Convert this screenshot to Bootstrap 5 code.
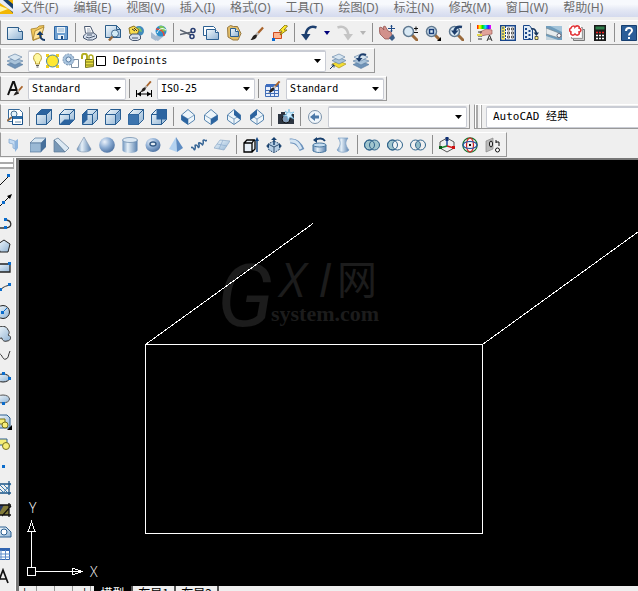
<!DOCTYPE html>
<html lang="zh-CN">
<head>
<meta charset="utf-8">
<meta name="viewport" content="width=device-width, initial-scale=1">
<title>AutoCAD</title>
<link href="https://cdn.jsdelivr.net/npm/bootstrap@5.3.0/dist/css/bootstrap.min.css" rel="stylesheet">
<style>
body { background: #efefef; font-family: "Liberation Sans", "Noto Sans CJK SC", sans-serif; }
.menubar { height: 17px; gap: 15px; background: linear-gradient(#f7f9fd 0 25%, #e3e7f4 60%, #d4daee); }
.menubar a { font: 12px/16px "Noto Sans", "Noto Sans CJK SC", sans-serif; color: #6c6c6c; white-space: nowrap; }
.app-logo { width: 18px; height: 17px; margin-right: -12px; }
.band { height: 28px; padding-top: 3px; }
.toolbar { height: 25px; padding: 0 2px; border: 1px solid #999; border-top-color: #fff; background: #f0f0f0; }
.toolbar.open-end { border-right: 0; flex: 1 0 auto; }
.tool { width: 23px; height: 23px; padding: 0; border: 0; background: none; display: flex; align-items: center; justify-content: center; flex: none; }
.tool svg { width: 16px; height: 16px; }
.tool.more { width: 13px; }
.tool.more svg { width: 6px; height: 4px; }
.divider { width: 6px; height: 19px; flex: none; background: linear-gradient(#8e8e8e, #8e8e8e) center / 1px 100% no-repeat; }
.combo {
  appearance: none; height: 22px; margin-left: 2px; border: 1px solid #c9ccd4; border-width: 2px 1px 1px; border-radius: 2px; padding: 0 3px; color: #000;
  font: 10px/18px "DejaVu Sans Mono", "Noto Sans CJK SC", monospace;
  background: #fff url("data:image/svg+xml,%3Csvg xmlns='http://www.w3.org/2000/svg' viewBox='0 0 7 4'%3E%3Cpath d='M0 0h7L3.5 4z'/%3E%3C/svg%3E") right 4px center / 7px 4px no-repeat;
}
.layer-combo { width: 298px; padding-left: 84px; }
.layer-state { position: absolute; left: 7px; top: 3px; width: 76px; height: 16px; pointer-events: none; }
.style-combo { width: 98px; }
.view-combo { width: 139px; }
.space-combo { width: 168px; padding-left: 6px; font-size: 11px; background-image: none; }
.grip { width: 9px; background: linear-gradient(90deg, #fff 0 1px, #aaa 1px 3px, transparent 3px 5px, #fff 5px 6px, #aaa 6px 7px, transparent 7px); }
.work { margin-top: 1px; min-height: 0; }
.draw-bar { width: 16px; overflow: hidden; border-right: 1px solid #fff; }
.draw-grip { height: 11px; width: 14px; border: 2px solid #aaa; border-width: 0 1px 2px 0; background: linear-gradient(#fff 0 4px, #aaa 4px 6px, #fff 6px 9px); }
.draw-bar .tool { width: 24px; height: 22px; margin-left: -8px; }
.stage { border: solid #777; border-width: 2px 0 0 3px; min-width: 0; }
.paper { background: #000; overflow: hidden; }
.paper > svg { display: block; }
.ucs { position: absolute; left: 0; bottom: 0; width: 90px; height: 90px; }
.tabs { height: 5px; overflow: hidden; background: #efefef; }
.tabs button { border: 0; padding: 0; height: 14px; font: 12px/12px "Noto Sans CJK SC", sans-serif; background: #efefef; color: #000; flex: none; }
.tabs .step { width: 18px; border-right: 1px solid #999; }
.tabs .sheet { width: 43px; border-right: 2px solid #555; }
.tabs .sheet.current { background: #000; color: #fff; margin-left: 3px; width: 39px; }
</style>
<script src="https://cdn.jsdelivr.net/npm/bootstrap@5.3.0/dist/js/bootstrap.bundle.min.js"></script>
</head>
<body class="vh-100 d-flex flex-column overflow-hidden">

<svg width="0" height="0" class="position-absolute" aria-hidden="true">
  <defs>
    <linearGradient id="gl" x1="0" y1="0" x2="1" y2="1"><stop offset="0" stop-color="#f4fafd"/><stop offset="1" stop-color="#8fb2d3"/></linearGradient>
    <linearGradient id="gm" x1="0" x2="1"><stop offset="0" stop-color="#6d93bd"/><stop offset=".35" stop-color="#e6f0f8"/><stop offset="1" stop-color="#5880ae"/></linearGradient>
    <radialGradient id="gs" cx=".35" cy=".3" r=".75"><stop offset="0" stop-color="#edf3fb"/><stop offset=".5" stop-color="#8eaed4"/><stop offset="1" stop-color="#4b70a0"/></radialGradient>
    <linearGradient id="rain"><stop offset="0" stop-color="#f00"/><stop offset=".2" stop-color="#ff0"/><stop offset=".4" stop-color="#0d0"/><stop offset=".6" stop-color="#0df"/><stop offset=".8" stop-color="#22f"/><stop offset="1" stop-color="#f0f"/></linearGradient>
    <g id="cube" stroke="#285d91" stroke-linejoin="round"><path fill="url(#gl)" d="M.5 5.500h10v10h-10zM.5 5.500l5-5h10l-5 5zM10.500 5.500l5-5v10l-5 5z"/></g>
    <g id="iso" stroke="#5583ae" stroke-linejoin="round"><path fill="#edf5fa" d="M8 .5L14.500 6v5L8 15.500 1.500 11V6z"/><path fill="none" d="M1.500 6L8 10l6.500-4M8 10v5" stroke-width=".7"/></g>
    <g id="lens"><path d="M10 10l5 5" stroke="#9a6a3c" stroke-width="3" stroke-linecap="round"/><circle cx="6.500" cy="6.500" r="5" fill="#d9e9f4" stroke="#5f7890" stroke-width="1.500"/></g>
    <g id="brush"><path d="M14.500 .5L7 9" stroke="#a9642c" stroke-width="2.500"/><path d="M9 6.500L6 10" stroke="#bbb" stroke-width="2.500"/><path d="M7.500 8.500c1 4-3.500 6-7 6 2-1.500 2-5 5-6z" fill="#25211f"/></g>
    <g id="printer"><path fill="#fff" stroke="#47566e" d="M3.500 8l-1-6.500h6l3 6.500"/><path d="M5 4h3M5 6h4" stroke="#9aa6b8"/><path fill="#d6dfec" stroke="#47566e" d="M1.500 11l3-3h7l3 2v3l-4 2h-5l-4-2z"/><path d="M4 12l3 1 6-2M5 10h5" stroke="#47566e" fill="none"/></g>
    <g id="stack" stroke="#587ba0" stroke-width=".6"><path fill="#6f93b8" d="M0 11.500l8-3 8 3-8 4z"/><path fill="#a9c3da" d="M0 8l8-3 8 3-8 4z"/><path fill="#d7e5f0" d="M1 4l7-3 7 3-7 4z"/></g>
  </defs>
</svg>

<nav class="menubar d-flex flex-shrink-0 overflow-hidden" aria-label="主菜单">
  <svg class="app-logo flex-shrink-0" viewBox="0 0 18 17"><path fill="#f2b705" d="M0 0h13v14H0z"/><path fill="#173f6b" d="M0 0h8l5 4v9z"/><path fill="#e9edf5" d="M0 0h3l10 9v3L0 3z"/><path fill="#fff6a8" d="M0 6l8 3-8 3z"/></svg>
  <a href="#" class="text-decoration-none">文件(F)</a>
  <a href="#" class="text-decoration-none">编辑(E)</a>
  <a href="#" class="text-decoration-none">视图(V)</a>
  <a href="#" class="text-decoration-none">插入(I)</a>
  <a href="#" class="text-decoration-none">格式(O)</a>
  <a href="#" class="text-decoration-none">工具(T)</a>
  <a href="#" class="text-decoration-none">绘图(D)</a>
  <a href="#" class="text-decoration-none">标注(N)</a>
  <a href="#" class="text-decoration-none">修改(M)</a>
  <a href="#" class="text-decoration-none">窗口(W)</a>
  <a href="#" class="text-decoration-none">帮助(H)</a>
</nav>

<div class="band d-flex flex-shrink-0 overflow-hidden">
  <div class="toolbar open-end d-flex align-items-center" role="toolbar" aria-label="标准">
    <button class="tool" aria-label="新建"><svg viewBox="0 0 16 16"><path fill="url(#gl)" stroke="#2c5d8a" d="M.5 2.500h11l4 4v8H.5z"/><path fill="#fff" stroke="#2c5d8a" d="M11.500 2.500v4h4"/></svg></button>
    <button class="tool" aria-label="打开"><svg viewBox="0 0 16 16"><path fill="#f0c75a" stroke="#a5802f" stroke-width=".8" d="M1 4l6-1 2-2 5-.5-3 12-8 3z"/><path fill="#ffe49a" stroke="#a5802f" stroke-width=".8" d="M3 15L5 6l9-4-3 10z"/><path fill="none" stroke="#163a66" stroke-width="1.800" d="M15 15c-4 0-5-2-5-6"/><path fill="#163a66" d="M6.500 10L10 6l3.500 4z"/></svg></button>
    <button class="tool" aria-label="保存"><svg viewBox="0 0 16 16"><path fill="#6fa0d0" stroke="#2a62a0" d="M1.500 1.500h13v13h-13z"/><path fill="#e8f1f8" d="M4 2h8v6H4zM5 10h6v4H5z"/><path d="M5 4h6M5 6h6" stroke="#92b2cf"/><path fill="#1d4c83" d="M8 11h2v3H8z"/></svg></button>
    <span class="divider"></span>
    <button class="tool" aria-label="打印"><svg viewBox="0 0 16 16"><use href="#printer"/></svg></button>
    <button class="tool" aria-label="打印预览"><svg viewBox="0 0 16 16"><path fill="url(#gl)" stroke="#2c5d8a" d="M.5 12.500v-12h11l4 4v8z"/><path fill="none" stroke="#2c5d8a" d="M11.500 .5v4h4"/><path stroke="#9a6a3c" stroke-width="2.500" d="M8 11l-4 4.500"/><circle cx="10" cy="8.500" r="3.500" fill="#d3eaf4" stroke="#456c91"/></svg></button>
    <button class="tool" aria-label="发布"><svg viewBox="0 0 16 16"><circle cx="11" cy="6" r="5" fill="#408bbd"/><path d="M8 4c3-3 5-1 6 3l-3-1z" fill="#7ec66e"/><path fill="#f9dc4c" stroke="#8b7322" d="M1 3l5-2 5 4-2 5-7-1z"/><path d="M4 4l3 2M6 3l3 3" stroke="#333"/><path fill="#d6dfec" stroke="#47566e" d="M1.500 11l3-2h6l2 2v3l-3 1.500h-5l-3-2z"/><path d="M4 13h6" stroke="#47566e"/></svg></button>
    <button class="tool" aria-label="三维 DWF"><svg viewBox="0 0 16 16"><path fill="#a6bad0" d="M0 7l5 1v8l-5-3zM5 9l8 2-6 5-5-2z"/><path fill="#e7eff7" d="M0 7l4-3 4 3-3 4z"/><circle cx="10" cy="6" r="5.500" fill="#2d8fcb"/><path fill="#7cc758" d="M8 1c4-1 6 1 7 5l-5 1z"/><path fill="none" stroke="#e0483a" stroke-width="1.500" d="M5 4c4 0 8 2 8 7"/><path fill="none" stroke="#fff" d="M6 8c2-4 5-6 9-3"/></svg></button>
    <span class="divider"></span>
    <button class="tool" aria-label="剪切"><svg viewBox="0 0 16 16"><path d="M0 5l11 5M0 9.500L12 7" stroke="#5c6572" stroke-width="1.500"/><circle cx="13" cy="5.500" r="2" fill="none" stroke="#273c70" stroke-width="1.500"/><circle cx="12" cy="11.500" r="2" fill="none" stroke="#273c70" stroke-width="1.500"/></svg></button>
    <button class="tool" aria-label="复制"><svg viewBox="0 0 16 16"><path fill="#fff" stroke="#2c6092" d="M.5 1.500h10l2 2v7H.5z"/><path fill="url(#gl)" stroke="#2c6092" d="M3.500 4.500h9l3 3v7h-12z"/><path fill="#fff" stroke="#2c6092" d="M12.500 4.500v3h3"/></svg></button>
    <button class="tool" aria-label="粘贴"><svg viewBox="0 0 16 16"><path fill="#e4bf69" stroke="#97783f" d="M1.500 2.500l3-2 3 1h4l3.500 7-3 6.500h-5l-5-3z"/><path fill="url(#gl)" stroke="#2c6092" d="M4.500 3.500h5l3 3v5h-8z"/><path fill="#fff" stroke="#2c6092" d="M9.500 3.500v3h3"/></svg></button>
    <button class="tool" aria-label="特性匹配"><svg viewBox="0 0 16 16"><use href="#brush" transform="translate(1 2) scale(.9)"/></svg></button>
    <button class="tool" aria-label="块编辑器"><svg viewBox="0 0 16 16"><path fill="#ffb58f" stroke="#d04a1c" d="M1.500 7.500h8v6h-8z"/><path fill="#ffe92e" stroke="#7d6a00" stroke-width=".8" d="M13 0L7 6h3L8 10l7-5h-3l3.500-4z"/><path fill="#0a6ad0" d="M0 13h3v3H0z"/></svg></button>
    <span class="divider"></span>
    <button class="tool" aria-label="放弃"><svg viewBox="0 0 16 16"><path fill="none" stroke="#1d3f6f" stroke-width="2.500" d="M15.500 2.500C9 0 5 4 4.500 11"/><path fill="#1d3f6f" d="M0 9h9.500L5 15.500z"/></svg></button>
    <button class="tool more" aria-label="放弃列表"><svg viewBox="0 0 6 4"><path fill="#00007a" d="M0 0h6L3 4z"/></svg></button>
    <button class="tool" aria-label="重做"><svg viewBox="0 0 16 16"><path fill="none" stroke="#c4c4c4" stroke-width="2.500" d="M.5 2.500C7 0 11 4 11.500 11"/><path fill="#c4c4c4" d="M16 9H6.500L11 15.500z"/></svg></button>
    <button class="tool more" aria-label="重做列表"><svg viewBox="0 0 6 4"><path fill="#b5b5b5" d="M0 0h6L3 4z"/></svg></button>
    <span class="divider"></span>
    <button class="tool" aria-label="实时平移"><svg viewBox="0 0 16 16"><path fill="#d2918b" stroke="#8a4844" stroke-width=".7" d="M0 3l2-1 3 3-1-3 2-1 3 5 3 1 1 4-3 3-4 0-5-5z"/><path fill="#3c5d86" d="M10 13l4-4 2 4-3 3z"/><path stroke="#1f4a84" d="M12.500 0v7M9 3.500h7"/><path fill="#1f4a84" d="M11 1.500L12.500 0 14 1.500zM11 5.500l1.500 1.500L14 5.500z"/></svg></button>
    <button class="tool" aria-label="实时缩放"><svg viewBox="0 0 16 16"><use href="#lens"/><path d="M12 3.500h4M14 1.500v4M12 7.500h4" stroke="#111"/></svg></button>
    <button class="tool" aria-label="窗口缩放"><svg viewBox="0 0 16 16"><use href="#lens"/><path fill="none" stroke="#173c78" stroke-width="1.500" d="M4.500 4.500h4v4h-4z"/><path d="M16 12v4h-4z"/></svg></button>
    <button class="tool" aria-label="缩放上一个"><svg viewBox="0 0 16 16"><use href="#lens"/><path fill="none" stroke="#1c3d6b" stroke-width="2.500" d="M14 2C9 1 7 3 6.500 7"/><path fill="#1c3d6b" d="M3 5.500h7.500L6.500 10z"/></svg></button>
    <span class="divider"></span>
    <button class="tool" aria-label="特性"><svg viewBox="0 0 16 16"><path fill="url(#rain)" d="M0 0h14v4H0z"/><path fill="#e2a39a" stroke="#8e4a45" stroke-width=".6" d="M3 7l6-3 6 1v4l-6 1-5 1z"/><path fill="none" stroke="#333" d="M1 7h4M1 11h4M1 14h4M10 16l2.500-6L15 16M11 14h3"/><path fill="#e6d94b" d="M0 9h5v2H0z"/></svg></button>
    <button class="tool" aria-label="设计中心"><svg viewBox="0 0 16 16"><path fill="#fff" stroke="#17458a" stroke-width="1.500" d="M.75 .75h14.500v14.500H.75z"/><path fill="#f5e25c" d="M1.500 1.500H5v13H1.500z"/><path stroke="#17458a" d="M5.500 1v14M3 2v12" stroke-dasharray="2 1"/><path fill="#fff" stroke="#333" stroke-width=".8" d="M7.500 3h2v2h-2zM11.500 3h2v2h-2zM7.500 7h2v2h-2zM11.500 7h2v2h-2zM7.500 11h2v2h-2zM11.500 11h2v2h-2z"/></svg></button>
    <button class="tool" aria-label="工具选项板"><svg viewBox="0 0 16 16"><path fill="#dfeaf5" stroke="#17458a" d="M.5 .5h6l3 4v10h-9z"/><path stroke="#17458a" stroke-width="2" stroke-dasharray="2 2" d="M3 3v11M6.500 5v9"/><path fill="none" stroke="#17365e" stroke-width="1.600" d="M8 4c4-1 5 2 5.500 5"/><path fill="#17365e" d="M10.500 7.500h5.500L13.500 11z"/><path fill="#fff27c" stroke="#333" stroke-width=".8" d="M12 11.500h3v3h-3z"/></svg></button>
    <button class="tool" aria-label="图纸集"><svg viewBox="0 0 16 16"><path fill="#6f9cbc" d="M0 1h16v14H0z"/><path fill="#a4c4da" d="M4 1h12v6z"/><path fill="#e7ecee" stroke="#73858f" stroke-width=".7" d="M0 3l13 5c3 1 3 4 0 5L0 9z"/><path fill="#c4d3dc" d="M0 11l12 4H0z"/><circle cx="13" cy="10.500" r="2" fill="#fff" stroke="#667"/></svg></button>
    <button class="tool" aria-label="标记集"><svg viewBox="0 0 16 16"><path fill="#ccc" stroke="#777" d="M4.500 4.500h11v11h-11z"/><path fill="#eee" stroke="#999" d="M2.500 2.500h11v11h-11z"/><path fill="#fff" d="M0 0h12v12H0z"/><path fill="none" stroke="#e23437" stroke-width="1.600" d="M2 3c1-3 4-2 4-1 2-2 5-1 4 1 3 1 2 4 0 4 1 3-2 4-4 2-2 2-5 1-4-2-2-1-2-3 0-4z"/></svg></button>
    <button class="tool" aria-label="快速计算器"><svg viewBox="0 0 16 16"><path fill="#1a1a1a" d="M2 0h12v16H2z"/><path fill="#2e7d4a" d="M3.500 1.500h9v3h-9z"/><path stroke="#e22" stroke-width="1.500" stroke-dasharray="2 1" d="M4 7.500h9"/><path stroke="#fff" stroke-width="1.500" stroke-dasharray="2 1" d="M4 10.500h9M4 13.500h9"/></svg></button>
    <span class="divider"></span>
    <button class="tool" aria-label="帮助"><svg viewBox="0 0 16 16"><path fill="#2a5d98" stroke="#173f70" d="M.5 .5h15v15H.5z"/><path fill="none" stroke="#fff" stroke-width="2" d="M5 6c0-4 6-4 6-.5C11 8 8 7.500 8 10.500M8 12v2"/></svg></button>
  </div>
</div>

<div class="band d-flex flex-shrink-0">
  <div class="toolbar d-flex align-items-center" role="toolbar" aria-label="图层">
    <button class="tool" aria-label="图层特性管理器"><svg viewBox="0 0 16 16"><use href="#stack"/></svg></button>
    <div class="position-relative d-flex">
      <select class="combo layer-combo" aria-label="图层"><option>Defpoints</option></select>
      <svg class="layer-state" viewBox="0 0 76 16" aria-hidden="true">
        <path fill="#fff8a0" stroke="#b89c33" d="M2.500 9c-4-4-1-8.500 2-8.500s6 4.500 2 8.500v2h-4z"/><path stroke="#555" d="M3 12.500h3M3.500 14h2"/>
        <path fill="#f1cf1b" d="M13 1h3v3h-3zM23 1h3v3h-3zM13 12h3v3h-3zM23 12h3v3h-3z"/><circle cx="19.500" cy="8" r="6" fill="#ffe832" stroke="#49829b"/>
        <path fill="#fff" stroke="#7d8ea0" d="M38.500 6.500h7v8h-7z"/><circle cx="35.500" cy="6.500" r="5.500" fill="#a9c4de" stroke="#7591b0" stroke-dasharray="2 1"/><circle cx="35.500" cy="6.500" r="2.500" fill="#e4eff9" stroke="#5b7da3"/>
        <path fill="none" stroke="#b3ad20" stroke-width="2" d="M49 6V3c0-3 5-3 5 0v3"/><path fill="#e8df3f" stroke="#79761d" d="M52.500 6.500h8v7l-8 1z"/><path stroke="#79761d" d="M53 9h7M53 12h7"/><path fill="none" stroke="#b3ad20" stroke-width="1.500" d="M56 6V3c1-2 4-1 4 1v3"/>
        <path fill="#fff" stroke="#000" d="M63.500 3.500h9v9h-9z"/>
      </svg>
    </div>
    <button class="tool" aria-label="置为当前图层"><svg viewBox="0 0 16 16"><path fill="#f3dd33" stroke="#a18b12" stroke-width=".6" d="M2 11l7-3 7 3-7 4z"/><path fill="#a9c3da" stroke="#587ba0" stroke-width=".6" d="M2 7.500l7-3 7 3-7 3.500z"/><path fill="#d7e5f0" stroke="#587ba0" stroke-width=".6" d="M2 4l7-3 6 3-6 3z"/><path d="M0 16l4-4M1.500 12H4v2.500" stroke="#17365e" fill="none"/></svg></button>
    <button class="tool" aria-label="上一个图层"><svg viewBox="0 0 16 16"><use href="#stack"/><path fill="none" stroke="#1c3d6b" stroke-width="2" d="M13 2C9 0 6 2 6 6"/><path fill="#1c3d6b" d="M3 5h6.500L6 9z"/></svg></button>
  </div>
</div>

<div class="band d-flex flex-shrink-0">
  <div class="toolbar d-flex align-items-center" role="toolbar" aria-label="样式">
    <button class="tool" aria-label="文字样式"><svg viewBox="0 0 16 16"><path fill="none" stroke="#111" stroke-width="2" d="M1 14L6 1h1l4 12M3 9h6"/><use href="#brush" transform="translate(6 5) scale(.65)"/></svg></button>
    <select class="combo style-combo" aria-label="文字样式"><option>Standard</option></select>
    <span class="divider"></span>
    <button class="tool" aria-label="标注样式"><svg viewBox="0 0 16 16"><use href="#brush" transform="translate(4 0) scale(.75)"/><path stroke="#000" d="M.5 9v7M15.500 9v7M1 13h14"/><path d="M1 13l4-2.500v5zM15 13l-4-2.500v5z"/></svg></button>
    <select class="combo style-combo" aria-label="标注样式"><option>ISO-25</option></select>
    <span class="divider"></span>
    <button class="tool" aria-label="表格样式"><svg viewBox="0 0 16 16"><path fill="#e6eefb" stroke="#426eb6" d="M.5 4.500h13v11H.5z"/><path fill="#3d6dc0" d="M1 3h13v3H1z"/><path stroke="#426eb6" d="M1 9.500h13M1 12.500h13M5.500 5v10M9.500 5v10"/><use href="#brush" transform="translate(3 0) scale(.8)"/></svg></button>
    <select class="combo style-combo" aria-label="表格样式"><option>Standard</option></select>
  </div>
</div>

<div class="band d-flex flex-shrink-0 overflow-hidden">
  <div class="toolbar d-flex align-items-center flex-shrink-0" role="toolbar" aria-label="视图">
    <button class="tool" aria-label="命名视图"><svg viewBox="0 0 16 16"><path fill="#fff" stroke="#356a9b" d="M1.500 .5h11l3 3v9h-14z"/><path stroke="#956c47" stroke-width="2" d="M0 12l5-4"/><circle cx="7" cy="5" r="3" fill="#e3f2fa" stroke="#466f91"/><path fill="#fff" stroke="#174f87" d="M5.500 7.500h10v8h-10z"/><path fill="#2d6da8" d="M6 7h9v3H6z"/><path stroke="#7594ae" d="M8 13h6"/></svg></button>
    <span class="divider"></span>
    <button class="tool" aria-label="俯视"><svg viewBox="0 0 16 16"><use href="#cube"/><path fill="#2c64a0" d="M1 5.500l4.500-5h10l-5 5z"/></svg></button>
    <button class="tool" aria-label="仰视"><svg viewBox="0 0 16 16"><use href="#cube"/><path fill="#2c64a0" d="M.5 15.500l5-5h10l-5 5z"/></svg></button>
    <button class="tool" aria-label="左视"><svg viewBox="0 0 16 16"><use href="#cube"/><path fill="#2c64a0" d="M.5 5.500l5-5v10l-5 5z"/></svg></button>
    <button class="tool" aria-label="右视"><svg viewBox="0 0 16 16"><use href="#cube"/><path fill="#7ba6d0" d="M11 6l4-4v8l-4 4z"/></svg></button>
    <button class="tool" aria-label="前视"><svg viewBox="0 0 16 16"><use href="#cube"/><path fill="#3c74ae" d="M.5 5.500h10v10H.5z"/></svg></button>
    <button class="tool" aria-label="后视"><svg viewBox="0 0 16 16"><use href="#cube"/><path fill="#2c64a0" d="M5.500 .5h10v10h-10z"/></svg></button>
    <span class="divider"></span>
    <button class="tool" aria-label="西南等轴测"><svg viewBox="0 0 16 16"><use href="#iso"/><path fill="#2c64a0" d="M1.500 6L8 10v5.500L1.500 11z"/></svg></button>
    <button class="tool" aria-label="东南等轴测"><svg viewBox="0 0 16 16"><use href="#iso"/><path fill="#2c64a0" d="M14.500 6L8 10v5.500l6.500-4.500z"/></svg></button>
    <button class="tool" aria-label="东北等轴测"><svg viewBox="0 0 16 16"><use href="#iso"/><path fill="#2c64a0" d="M8 .5L14.500 6v5L8 6z"/></svg></button>
    <button class="tool" aria-label="西北等轴测"><svg viewBox="0 0 16 16"><use href="#iso"/><path fill="#2c64a0" d="M8 .5L1.500 6v5L8 6z"/></svg></button>
    <span class="divider"></span>
    <button class="tool" aria-label="创建相机"><svg viewBox="0 0 16 16"><path fill="#2c3440" d="M0 5h3V3h4v2h9v10H0z"/><circle cx="8" cy="10" r="4" fill="#829cb8" stroke="#111"/><path fill="#d9f1ff" stroke="#5fb2dd" stroke-width=".6" d="M11 0l1 4 4-1-3 3 3 4-4-2-2 3-1-4-4 0 4-2-2-3 3 2z"/></svg></button>
    <span class="divider"></span>
    <button class="tool" aria-label="上一视图"><svg viewBox="0 0 16 16"><circle cx="8" cy="8" r="6.500" fill="#f0f6fb" stroke="#7d93aa"/><path fill="#4c79a8" d="M3 8l5-4v2.500h4v3H8V12z"/></svg></button>
    <select class="combo view-combo" aria-label="视图"><option></option></select>
  </div>
  <div class="toolbar open-end d-flex align-items-center ms-1 ps-0" role="toolbar" aria-label="工作空间">
    <span class="grip align-self-stretch"></span>
    <select class="combo space-combo flex-grow-1" aria-label="工作空间"><option>AutoCAD 经典</option></select>
  </div>
</div>

<div class="band d-flex flex-shrink-0">
  <div class="toolbar d-flex align-items-center" role="toolbar" aria-label="建模">
    <button class="tool" aria-label="多段体"><svg viewBox="0 0 16 16"><path fill="#c4dbf3" stroke="#7ca3cf" stroke-width=".7" d="M2 2l6 2v8l-2-1V7L2 6z"/><path fill="#8db4de" d="M8 4l3-2v9l-3 4z"/></svg></button>
    <button class="tool" aria-label="长方体"><svg viewBox="0 0 16 16"><path fill="#d9e8f3" stroke="#54779b" stroke-width=".7" d="M0 6l5-5h11l-5 5z"/><path fill="#9ab9d5" stroke="#54779b" stroke-width=".7" d="M0 6h11v9H0z"/><path fill="#456f9b" d="M11 6l5-5v9l-5 5z"/></svg></button>
    <button class="tool" aria-label="楔体"><svg viewBox="0 0 16 16"><path fill="#dce9f3" stroke="#5c7a97" stroke-width=".7" d="M1 3l4-2 11 10-4 4z"/><path fill="#7898b7" stroke="#5c7a97" stroke-width=".7" d="M1 3v12h11z"/></svg></button>
    <button class="tool" aria-label="圆锥体"><svg viewBox="0 0 16 16"><path fill="url(#gm)" stroke="#7890aa" stroke-width=".6" d="M8 0l7 12c0 4-14 4-14 0z"/></svg></button>
    <button class="tool" aria-label="球体"><svg viewBox="0 0 16 16"><circle cx="8" cy="8" r="7.800" fill="url(#gs)"/></svg></button>
    <button class="tool" aria-label="圆柱体"><svg viewBox="0 0 16 16"><path fill="url(#gm)" d="M.5 3v10c0 4 15 4 15 0V3z"/><ellipse cx="8" cy="3" rx="7.500" ry="2.500" fill="#dce8f3" stroke="#6587a9" stroke-width=".7"/></svg></button>
    <button class="tool" aria-label="圆环体"><svg viewBox="0 0 16 16"><ellipse cx="8" cy="8" rx="7.500" ry="7" fill="url(#gs)"/><ellipse cx="8" cy="7" rx="3" ry="2" fill="#e4edf5" stroke="#355b86" stroke-width="1.500"/></svg></button>
    <button class="tool" aria-label="棱锥面"><svg viewBox="0 0 16 16"><path fill="#b3d2f0" d="M8 0L1 12l8 3z"/><path fill="#5d8cc2" d="M8 0l7 11-6 4z"/></svg></button>
    <button class="tool" aria-label="螺旋"><svg viewBox="0 0 16 16"><path fill="none" stroke="#356495" stroke-width="1.500" d="M0 11c2-3 3 4 4 1s-1-4 1-4 2 4 3 2-2-5 1-4 2 3 3 1-1-4 1-4 1 2 3 0"/></svg></button>
    <button class="tool" aria-label="平面曲面"><svg viewBox="0 0 16 16"><path fill="url(#gl)" stroke="#8da9c7" stroke-width=".7" d="M6 3l10 1-6 9-10-2z"/><path fill="none" stroke="#86a6c9" stroke-width=".6" d="M3 7l10 2M9 3L5 12"/></svg></button>
    <span class="divider"></span>
    <button class="tool" aria-label="拉伸"><svg viewBox="0 0 16 16"><path fill="#e7eff7" stroke="#000" stroke-width="1.300" d="M1 6h8v9H1zM1 6l3-3h7L9 6M9 15l3-3V3"/><path stroke="#174985" stroke-width="1.500" d="M14 3v12"/><path fill="#174985" d="M12 4l2-4 2 4z"/></svg></button>
    <button class="tool" aria-label="按住并拖动"><svg viewBox="0 0 16 16"><path fill="#b7cfe6" stroke="#304e70" stroke-dasharray="2 1" d="M8 4l6 3v5l-6 4-6-4V7z"/><path fill="none" stroke="#304e70" d="M2 7l6 3 6-3M8 10v5"/><path stroke="#16406f" stroke-width="1.500" d="M8 2v6"/><path fill="#16406f" d="M5 3l3-3 3 3zM0 9l3-2v4zM16 9l-3-2v4z"/></svg></button>
    <button class="tool" aria-label="扫掠"><svg viewBox="0 0 16 16"><path fill="none" stroke="#6c92bc" stroke-width="5" d="M1 4c7-1 10 4 12 9"/><path fill="none" stroke="#d5e5f3" stroke-width="3" d="M1 4c7-1 9 4 11 8"/></svg></button>
    <button class="tool" aria-label="旋转"><svg viewBox="0 0 16 16"><path fill="url(#gm)" stroke="#49779f" d="M1 8v6c4 2 9 2 13 0V8z"/><ellipse cx="7.500" cy="8" rx="6.500" ry="2" fill="#c5dcf0" stroke="#49779f"/><path fill="none" stroke="#173f6d" stroke-width="1.800" d="M3 3c4-2 8-2 10 1"/><path fill="#173f6d" d="M5 0v6L1 3z"/></svg></button>
    <button class="tool" aria-label="放样"><svg viewBox="0 0 16 16"><path fill="url(#gm)" stroke="#7da1c6" stroke-width=".7" d="M3 1h10c-3 4-3 7 1 12-2 3-10 3-12 0 4-5 4-8 1-12z"/></svg></button>
    <span class="divider"></span>
    <button class="tool" aria-label="并集"><svg viewBox="0 0 16 16"><g fill="#a0c5ce" stroke="#2f638b"><circle cx="5.500" cy="8" r="5"/><circle cx="10.500" cy="8" r="5"/></g><circle cx="5.500" cy="8" r="5" fill="none" stroke="#2f638b"/></svg></button>
    <button class="tool" aria-label="差集"><svg viewBox="0 0 16 16"><circle cx="5.500" cy="8" r="5" fill="#a0c5ce" stroke="#2f638b"/><circle cx="10.500" cy="8" r="5" fill="#f2f4f5" stroke="#2f638b"/><circle cx="5.500" cy="8" r="5" fill="none" stroke="#2f638b"/></svg></button>
    <button class="tool" aria-label="交集"><svg viewBox="0 0 16 16"><path fill="#93bdc8" d="M8 4c3 3 3 5 0 8-3-3-3-5 0-8z"/><g fill="none" stroke="#2f638b"><circle cx="5.500" cy="8" r="5"/><circle cx="10.500" cy="8" r="5"/></g></svg></button>
    <span class="divider"></span>
    <button class="tool" aria-label="三维移动"><svg viewBox="0 0 16 16"><path fill="none" stroke="#555" d="M8 1l7 4v6l-7 4-7-4V5z"/><path stroke="#1a48a2" stroke-width="1.500" d="M8 1v8"/><path stroke="#d31a1a" stroke-width="1.500" d="M8 9l7 2"/><path stroke="#19862a" stroke-width="1.500" d="M8 9l-7 2"/><path fill="#0c2e74" d="M6.500 0h3v4h-3z"/><path fill="#c11" d="M13 9h3v3h-3z"/><path fill="#075b17" d="M0 9h3v3H0z"/></svg></button>
    <button class="tool" aria-label="三维旋转"><svg viewBox="0 0 16 16"><g fill="none" stroke-width="1.200"><circle cx="8" cy="8" r="7.200" stroke="#16712b"/><ellipse cx="8" cy="8" rx="3.500" ry="7" stroke="#d12222"/><ellipse cx="8" cy="8" rx="7" ry="3.500" stroke="#2151a1"/></g><path fill="#111" d="M7 7h2v2H7z"/></svg></button>
    <button class="tool" aria-label="三维对齐"><svg viewBox="0 0 16 16"><path fill="#bbb" stroke="#888" stroke-width=".7" d="M1 4l7-3v11l-7 3z"/><ellipse cx="6" cy="7" rx="1.500" ry="3" fill="#eee" stroke="#111"/><path fill="none" stroke="#111" d="M11 5h3v4M11 3v3"/><circle cx="12.500" cy="13" r="2" fill="#fff" stroke="#111"/></svg></button>
  </div>
</div>

<main class="work d-flex flex-grow-1">
  <div class="draw-bar flex-shrink-0" role="toolbar" aria-label="绘图">
    <div class="draw-grip"></div>
    <button class="tool" aria-label="直线"><svg viewBox="0 0 16 16"><path stroke="#111" d="M2 15L13 4"/><path fill="#0b6ccc" d="M11 2h3v3h-3z"/></svg></button>
    <button class="tool" aria-label="构造线"><svg viewBox="0 0 16 16"><path stroke="#111" d="M2 14L14 2"/><path d="M16 0l-2 5-3-3z"/><path fill="#0b6ccc" d="M6 7h3v3H6z"/></svg></button>
    <button class="tool" aria-label="多段线"><svg viewBox="0 0 16 16"><path fill="none" stroke="#333" stroke-width="1.300" d="M0 12h10c7-1 6-8-1-8"/><path fill="#0b6ccc" d="M8 2h3v3H8zM8 10h3v3H8z"/></svg></button>
    <button class="tool" aria-label="正多边形"><svg viewBox="0 0 16 16"><path fill="url(#gl)" stroke="#222" d="M8 2l6 4-2 8H4L2 6z"/></svg></button>
    <button class="tool" aria-label="矩形"><svg viewBox="0 0 16 16"><path fill="url(#gl)" stroke="#222" stroke-width="1.300" d="M0 4h14v8H0z"/><path fill="#0b6ccc" d="M12 2h3v3h-3z"/></svg></button>
    <button class="tool" aria-label="圆弧"><svg viewBox="0 0 16 16"><path fill="none" stroke="#333" d="M4 9c2-4 6-5 10-6"/><path fill="#0b6ccc" d="M12 1h3v3h-3zM3 6h3v3H3z"/></svg></button>
    <button class="tool" aria-label="圆"><svg viewBox="0 0 16 16"><circle cx="7" cy="8" r="6.500" fill="url(#gl)" stroke="#222"/><path stroke="#0b6ccc" d="M6 9l5-5"/><path fill="#0b6ccc" d="M5 7h3v3H5z"/></svg></button>
    <button class="tool" aria-label="修订云线"><svg viewBox="0 0 16 16"><path fill="url(#gl)" stroke="#333" d="M2 2c3-3 9-2 10 2 2 2 1 4 0 5 4 1 3 6-1 6-3 1-5-1-5-3-4 1-4-1-5-3z"/></svg></button>
    <button class="tool" aria-label="样条曲线"><svg viewBox="0 0 16 16"><path fill="none" stroke="#333" d="M2 7c4-4 4 6 8 4 3-1 2-4 4-8"/></svg></button>
    <button class="tool" aria-label="椭圆"><svg viewBox="0 0 16 16"><ellipse cx="7" cy="8" rx="6.500" ry="4" fill="url(#gl)" stroke="#222"/><path fill="#0b6ccc" d="M6 2h3v3H6zM12 7h3v3h-3z"/></svg></button>
    <button class="tool" aria-label="椭圆弧"><svg viewBox="0 0 16 16"><ellipse cx="7" cy="7" rx="6.500" ry="4" fill="url(#gl)" stroke="#555"/><path fill="#0b6ccc" d="M6 10h3v3H6z"/></svg></button>
    <button class="tool" aria-label="插入块"><svg viewBox="0 0 16 16"><path fill="url(#gl)" stroke="#2c6092" d="M2 1h9l3 3v10H2z"/><path fill="#f6ed78" stroke="#76701c" d="M3 5h6v5H3z"/><circle cx="9" cy="11" r="3" fill="#f6ed78" stroke="#76701c"/><path d="M16 11v5h-5z"/></svg></button>
    <button class="tool" aria-label="创建块"><svg viewBox="0 0 16 16"><path fill="#f6ed78" stroke="#2c6092" d="M1 3h10v6H1z"/><circle cx="10" cy="10" r="3.500" fill="#f6ed78" stroke="#76701c"/></svg></button>
    <button class="tool" aria-label="点"><svg viewBox="0 0 16 16"><path fill="#0b6ccc" d="M6 7h3v3H6z"/></svg></button>
    <button class="tool" aria-label="图案填充"><svg viewBox="0 0 16 16"><path fill="#fff" stroke="#1d5485" stroke-width="1.300" d="M2 4h13M2 13h13M13 1v14"/><path stroke="#3879ad" d="M3 4l9 9M7 4l6 6M3 8l5 5M15 4L6 14"/></svg></button>
    <button class="tool" aria-label="渐变色"><svg viewBox="0 0 16 16"><path fill="#827b39" d="M2 3h11v10H2z"/><path fill="#263765" d="M2 3h6L2 13z"/><path fill="none" stroke="#111" stroke-width="1.300" d="M2 3h13M2 13h13M13 1v14M15 4l-9 10"/></svg></button>
    <button class="tool" aria-label="面域"><svg viewBox="0 0 16 16"><path fill="url(#gl)" stroke="#2c6092" d="M2 3h8l5 5v5H2z"/><circle cx="8" cy="8" r="3" fill="#fff" stroke="#2c6092"/></svg></button>
    <button class="tool" aria-label="表格"><svg viewBox="0 0 16 16"><path fill="#fff" stroke="#3265b0" d="M1 2.500h12.500v11H1z"/><path fill="#3265b0" d="M1 2h13v3H1z"/><path stroke="#5d8bca" d="M1 8h13M1 11h13M5 4v10M9.500 4v10"/></svg></button>
    <button class="tool" aria-label="多行文字"><svg viewBox="0 0 16 16"><path fill="none" stroke="#111" stroke-width="1.700" d="M2 15L7 2l5 13M4 11h7"/></svg></button>
  </div>

  <section class="stage flex-grow-1 d-flex flex-column" aria-label="绘图区">
    <div class="paper position-relative flex-grow-1">
      <svg width="100%" height="100%" class="position-absolute top-0 start-0">
        <g fill="#1c1c1c">
          <text x="198" y="166" font-family="Roboto" font-style="italic" font-size="86">G</text>
          <text x="261" y="137" font-family="Open Sans" font-style="italic" font-size="48">X</text>
          <text x="299" y="137" font-family="Open Sans" font-style="italic" font-size="48">I</text>
          <text x="318" y="134" font-family="Noto Sans CJK SC" font-size="40">网</text>
          <text x="252" y="161" font-family="Liberation Serif" font-weight="700" font-size="22">system.com</text>
        </g>
        <g fill="none" stroke="#fff" shape-rendering="crispEdges">
          <path d="M126.500 184.500h337v189h-337zM126.500 184.500L294 63.500M463.500 184.500L963.500-177.500"/>
        </g>
      </svg>
      <svg class="ucs" viewBox="0 0 90 90">
        <g fill="none" stroke="#fff" shape-rendering="crispEdges">
          <path d="M8.500 71.500h8v8h-8zM12.500 71V35M17 75.500h46"/>
          <path d="M12.500 25.500l3.500 10H9zM63 75.500l-10-3.500v7z"/>
        </g>
        <g fill="#fff" font-family="Open Sans" font-weight="300" font-size="14"><text x="10" y="17">Y</text><text x="71" y="81">X</text></g>
      </svg>
    </div>
    <div class="tabs d-flex flex-shrink-0 align-items-start">
      <button class="step" aria-label="第一个">|◂</button><button class="step" aria-label="上一个">◂</button><button class="step" aria-label="下一个">▸</button><button class="step" aria-label="最后一个">▸|</button>
      <button class="sheet current">模型</button><button class="sheet">布局1</button><button class="sheet">布局2</button>
    </div>
  </section>
</main>
</body>
</html>
